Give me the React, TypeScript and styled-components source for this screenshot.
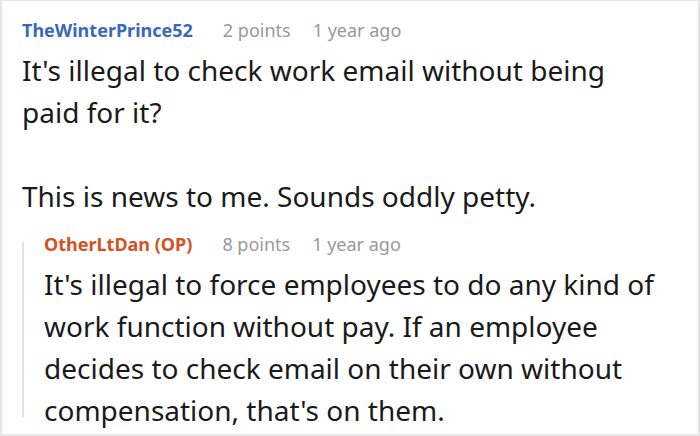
import React from "react";
import styled, { createGlobalStyle } from "styled-components";

const GlobalStyle = createGlobalStyle`
  html, body {
    margin: 0;
    padding: 0;
    background: #ffffff;
  }
  body {
    font-family: "Noto Sans", "Open Sans", "DejaVu Sans", sans-serif;
  }
`;

const Frame = styled.div`
  box-sizing: border-box;
  width: 700px;
  height: 436px;
  overflow: hidden;
  border: 2px solid #e6e6e6;
  border-top-width: 1px;
  padding: 16px 30px 0 20px;
`;

const Comment = styled.div`
  display: flex;
  flex-direction: column;
`;

const Meta = styled.div<{ $nested?: boolean }>`
  display: flex;
  align-items: baseline;
  font-size: 18px;
  line-height: 26px;
  margin-top: ${(p) => (p.$nested ? "-11px" : "0")};
`;

const Author = styled.span<{ $op?: boolean }>`
  font-weight: 700;
  color: ${(p) => (p.$op ? "#d4521f" : "#3a69b8")};
  margin-right: 30px;
`;

const Points = styled.span`
  color: #999999;
  margin-right: 22px;
`;

const Time = styled.span`
  color: #999999;
`;

const Body = styled.div`
  color: #1a1a1a;
  font-size: 28px;
  line-height: 42px;
  margin-top: 6px;

  p {
    margin: 0 0 42px 0;
  }
  p:last-child {
    margin-bottom: 0;
  }
`;

const Reply = styled.div`
  margin-top: 25px;
  border-left: 2px solid #e3e3e3;
  padding-left: 20px;
  height: 175px;
`;

type Props = {
  author: string;
  points: number;
  time: string;
  op?: boolean;
  nested?: boolean;
  children: React.ReactNode;
};

function CommentBlock({ author, points, time, op, nested, children }: Props) {
  return (
    <Comment>
      <Meta $nested={nested}>
        <Author $op={op}>{author}</Author>
        <Points>{points} points</Points>
        <Time>{time}</Time>
      </Meta>
      <Body>{children}</Body>
    </Comment>
  );
}

export default function App() {
  return (
    <>
      <GlobalStyle />
      <Frame>
        <CommentBlock author="TheWinterPrince52" points={2} time="1 year ago">
          <p>It's illegal to check work email without being paid for it?</p>
          <p>This is news to me. Sounds oddly petty.</p>
        </CommentBlock>
        <Reply>
          <CommentBlock author="OtherLtDan (OP)" points={8} time="1 year ago" op nested>
            It's illegal to force employees to do any kind of work function without pay. If an
            employee decides to check email on their own without compensation, that's on them.
          </CommentBlock>
        </Reply>
      </Frame>
    </>
  );
}
